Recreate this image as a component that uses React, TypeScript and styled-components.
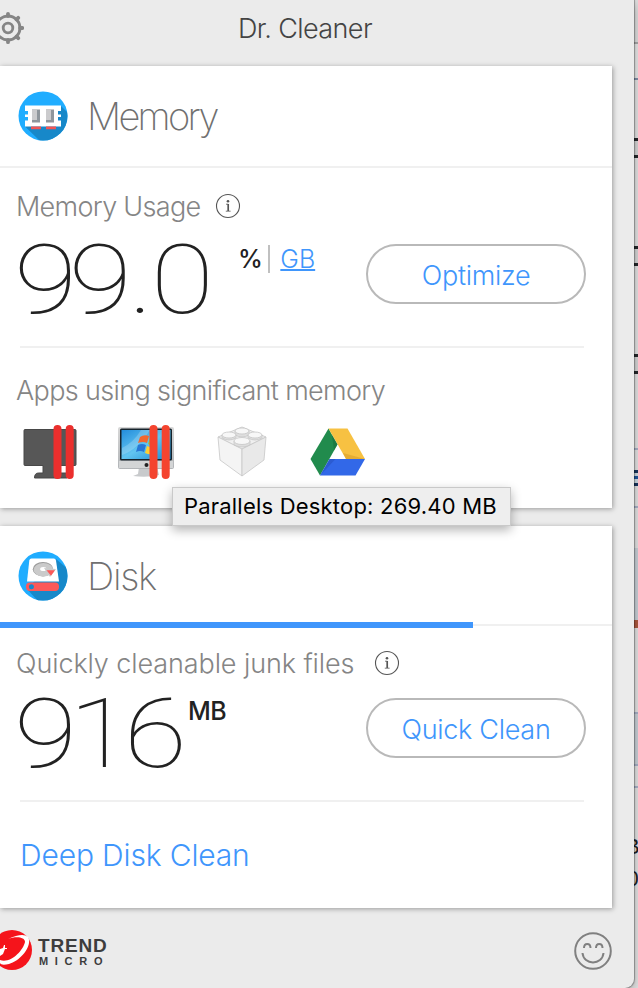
import React from 'react';
import styled, { createGlobalStyle } from 'styled-components';

const GlobalStyle = createGlobalStyle`
  * { box-sizing: border-box; }
  body {
    margin: 0;
    overflow: hidden;
    background: #e4e4e4;
    font-family: Inter, "Liberation Sans", sans-serif;
  }
`;

const Desktop = styled.div`
  display: grid;
  grid-template-columns: 634px 4px;
  width: 638px;
  height: 988px;
  overflow: hidden;
`;

const Window = styled.main`
  position: relative;
  z-index: 1;
  display: flex;
  flex-direction: column;
  background: #ebebeb;
  border-bottom-right-radius: 9px;
  box-shadow: 0 0 1px 1px rgba(0, 0, 0, 0.3), 0 4px 12px rgba(0, 0, 0, 0.3);
`;

const Header = styled.header`
  display: flex;
  align-items: center;
  flex: none;
  height: 66px;
  padding-bottom: 10px;
`;

const Title = styled.h1`
  margin: 0 0 0 214px;
  font-size: 27px;
  font-weight: 300;
  letter-spacing: -0.6px;
  white-space: nowrap;
  color: #444;
`;

const Card = styled.section<{ $height: number }>`
  flex: none;
  width: 612px;
  height: ${({ $height }) => $height}px;
  margin-bottom: 18px;
  background: #fff;
  box-shadow: 1px 1px 5px rgba(0, 0, 0, 0.35);
`;

const CardHead = styled.div`
  display: flex;
  align-items: center;
  gap: 19px;
  height: 102px;
  padding-left: 18px;
  border-bottom: 2px solid #f0f0f0;
`;

const DiskHead = styled(CardHead)`
  height: 98px;
  padding-top: 2px;
  border: 0;
`;

const CardTitle = styled.h2<{ $spacing: number }>`
  margin: 0;
  font-size: 38px;
  line-height: 48px;
  font-weight: 200;
  letter-spacing: ${({ $spacing }) => $spacing}px;
  color: #707070;
`;

const Track = styled.div`
  height: 6px;
  margin-top: -2px;
  background: linear-gradient(#fff 2px, #f0f0f0 2px, #f0f0f0 4px, #fff 4px);
`;

const Bar = styled.div`
  height: 6px;
  background: #3f96fc;
`;

const LabelRow = styled.div<{ $gap: number; $height: number }>`
  display: flex;
  align-items: center;
  gap: ${({ $gap }) => $gap}px;
  height: ${({ $height }) => $height}px;
  padding: 2px 0 0 16px;
`;

const Label = styled.span<{ $spacing: number }>`
  font-size: 27px;
  font-weight: 300;
  letter-spacing: ${({ $spacing }) => $spacing}px;
  white-space: nowrap;
  color: #858585;
`;

const ValueRow = styled.div`
  display: flex;
  height: 106px;
  margin: 0 26px 0 20px;
  background: linear-gradient(#f0f0f0, #f0f0f0) 0 100% / 564px 2px no-repeat;
`;

const ValueBox = styled.div<{ $width: number }>`
  flex: none;
  width: ${({ $width }) => $width}px;
  margin-left: -6px;
`;

const Value = styled.span`
  display: inline-block;
  font-family: Roboto, "Liberation Sans", sans-serif;
  font-size: 97px;
  font-weight: 100;
  line-height: 77px;
  letter-spacing: -7px;
  white-space: nowrap;
  color: #222;
  transform: scaleX(1.19);
  transform-origin: left;
`;

const Point = styled.span`
  margin: 0 5px 0 4px;
`;

const Units = styled.div<{ $top: number }>`
  display: flex;
  align-items: center;
  height: 30px;
  margin-top: ${({ $top }) => $top}px;
  font-size: 25px;
  color: #222;
`;

const Unit = styled.span`
  font-weight: 500;
  letter-spacing: -0.5px;
`;

const UnitLink = styled.a`
  padding-left: 10px;
  margin-left: 6px;
  border-left: 2px solid #c0c0c0;
  line-height: 28px;
  font-weight: 300;
  color: #3f96fc;
  text-decoration: underline;
  text-decoration-thickness: 2px;
`;

const PillButton = styled.button<{ $spacing: number }>`
  width: 220px;
  height: 60px;
  margin: 2px 0 0 auto;
  padding: 3px 0 0;
  border: 2px solid #b9b9b9;
  border-radius: 30px;
  background: #fff;
  font: 300 27px Inter, sans-serif;
  letter-spacing: ${({ $spacing }) => $spacing}px;
  color: #3f96fc;
`;

const AppsLabel = styled.div`
  display: flex;
  align-items: center;
  height: 72px;
  padding: 12px 0 0 16px;
`;

const Apps = styled.div`
  position: relative;
  display: flex;
  gap: 36px;
  padding-left: 20px;
`;

const Tooltip = styled.div`
  position: absolute;
  z-index: 2;
  left: 172px;
  top: 67px;
  display: flex;
  align-items: center;
  width: 339px;
  height: 39px;
  padding: 0 0 2px 11px;
  border: 1px solid #c9c9c9;
  background: #eeeeee;
  box-shadow: 0 4px 10px rgba(0, 0, 0, 0.3);
  font-size: 22px;
  letter-spacing: 0.2px;
  white-space: nowrap;
  color: #000;
`;

const DeepClean = styled.a`
  display: block;
  padding: 35px 0 0 20px;
  font-size: 30px;
  font-weight: 300;
  letter-spacing: -0.15px;
  color: #3f96fc;
`;

const Footer = styled.footer`
  display: flex;
  align-items: center;
  gap: 6px;
  height: 50px;
  padding-right: 22px;
`;

const Brand = styled.div`
  flex: 1;
  font-family: "Liberation Sans", sans-serif;
  font-weight: 700;
  color: #3d3d3d;
`;

const BrandTop = styled.div`
  font-size: 19px;
  line-height: 19px;
  letter-spacing: 0.8px;
`;

const BrandBottom = styled.div`
  padding-left: 1px;
  font-size: 11px;
  line-height: 12px;
  letter-spacing: 6.7px;
`;

const Backdrop = styled.div`
  width: 4px;
  overflow: hidden;
`;

const Strip = styled.div<{ $height: number; $color: string }>`
  height: ${({ $height }) => $height}px;
  background: ${({ $color }) => $color};
`;

const strips: [number, string][] = [
  [42, '#dedede'], [2, '#a9a9a9'],
  [34, '#e8e8e8'], [2, '#8190a8'],
  [58, '#e4e4e4'], [3, '#25292c'], [14, '#d6d6d6'], [3, '#25292c'],
  [88, '#e4e4e4'], [3, '#25292c'], [14, '#d6d6d6'], [3, '#25292c'],
  [88, '#e4e4e4'], [3, '#25292c'], [14, '#d6d6d6'], [3, '#25292c'],
  [74, '#e4e4e4'], [2, '#a9b2c8'], [20, '#e4e4e4'],
  [3, '#17365f'], [3, '#cfdce4'], [3, '#1d559c'], [4, '#cfdce4'], [3, '#17365f'],
  [20, '#e4e4e4'], [2, '#a9b2c8'], [40, '#e4e4e4'],
  [72, '#c9d1d8'], [8, '#b0593f'],
  [84, '#e4e4e4'], [2, '#a9b2c8'], [50, '#c9d1d8'], [2, '#a9b2c8'],
  [20, '#e4e4e4'], [2, '#a9b2c8'], [43, '#e4e4e4'],
];

const Fragment = styled.div<{ $shift: number }>`
  height: 32px;
  margin-left: ${({ $shift }) => $shift}px;
  background: #e4e4e4;
  font: 22px/32px "Liberation Sans", sans-serif;
  color: #222;
`;

const GearIcon = () => (
  <svg width="24" height="34" viewBox="0 11 24 34" fill="none" stroke="#858585">
    <circle cx="8" cy="28" r="12" strokeWidth="2.8" />
    <circle cx="8" cy="28" r="4.8" strokeWidth="2.8" />
    <path d="M8 16v-2.2M8 40v2.2M20 28h2.3M16.5 19.5l1.7-1.7M16.5 36.5l1.7 1.7" strokeWidth="3.8" strokeLinecap="round" />
  </svg>
);

const InfoIcon = () => (
  <svg width="26" height="26" viewBox="0 0 26 26" fill="none" stroke="#555">
    <circle cx="13" cy="13" r="11.5" strokeWidth="1.1" />
    <circle cx="13" cy="8.3" r="1.3" fill="#555" stroke="none" />
    <path d="M11 11.2h2.3M10.8 18.2h4.8" strokeWidth="0.8" />
    <path d="M13.2 11v7" strokeWidth="1.7" />
  </svg>
);

const MemoryIcon = () => (
  <svg width="50" height="50" viewBox="0 0 50 50">
    <clipPath id="mem"><circle cx="25" cy="25" r="24.5" /></clipPath>
    <g clipPath="url(#mem)">
      <path fill="#20adff" d="M0 0h50v50H0z" />
      <path fill="#1788c9" d="M7 35.5 22 50h28V22l-7-7z" />
      <path fill="#fff" d="M7 14.5h36V20h-3v3.500h3V26h-3v3.500h3v6H7v-6h3V26H7v-2.500h3V20H7z" />
      <path fill="#ef5656" d="M13 35.500h10v2.800H13zM28 35.500h10v2.800H28z" />
      <path fill="#8f969c" d="M14 18.500h8v13h-8zM28 18.500h8v13h-8z" />
      <path fill="#cbcbcd" d="M14 18.500h5v10.500h-5zM28 18.500h5v10.500h-5z" />
    </g>
  </svg>
);

const DiskIcon = () => (
  <svg width="50" height="50" viewBox="0 0 50 50">
    <clipPath id="disk"><circle cx="25" cy="25" r="24.5" /></clipPath>
    <g clipPath="url(#disk)">
      <path fill="#20adff" d="M0 0h50v50H0z" />
      <path fill="#1788c9" d="M38 8 52 20v30H20L9 38z" />
      <path fill="#fff" d="M13.5 7.5h22.2q2 0 2.3 2L41 30.5H9L11.3 9.5q.3-2 2.2-2z" />
      <ellipse cx="25" cy="18.2" rx="10.2" ry="7.2" fill="#999" />
      <ellipse cx="25.4" cy="18.8" rx="9.8" ry="6.8" fill="#cacaca" />
      <ellipse cx="25.3" cy="18" rx="3.2" ry="2" fill="#fff" />
      <path fill="#cacaca" d="m26 17 12 1-6 8z" />
      <path fill="#fc5959" d="M28.5 19.3H37l-4 5.5z" />
      <rect x="8" y="31.5" width="33" height="8.5" rx="4" fill="#fc5959" />
      <circle cx="13.4" cy="35.8" r="2.5" fill="#1788c9" />
    </g>
  </svg>
);

const ParallelsIcon = () => (
  <svg width="60" height="60" viewBox="0 0 60 60">
    <path fill="#575757" stroke="#484848" d="M5 9.5h50q1 0 1 1v34q0 1-1 1H37V53h10v5H14.500q0-5 4-5h4.500v-7.500H5q-1 0-1-1v-34q0-1 1-1z" />
    <path stroke="#eb2f2d" strokeWidth="8" strokeLinecap="round" d="M37.500 9v46M49.700 9v46" />
  </svg>
);

const WindowsMacIcon = () => (
  <svg width="60" height="60" viewBox="0 0 60 60">
    <defs>
      <linearGradient id="screen" x2="1" y2="1">
        <stop stopColor="#238cdb" /><stop offset=".5" stopColor="#62c5f1" /><stop offset="1" stopColor="#188ad3" />
      </linearGradient>
      <linearGradient id="metal" x2="0" y2="1">
        <stop stopColor="#d8d8d8" /><stop offset="1" stopColor="#b1b4b7" />
      </linearGradient>
    </defs>
    <path d="M23 47h18l2 8q-12 3-26 1l5-2z" fill="#c8cacc" />
    <rect x="2" y="7" width="56" height="42" rx="2" fill="url(#metal)" />
    <path d="M3 41h54v7H3z" fill="#d3d5d6" />
    <rect x="4" y="8.500" width="52" height="32" rx="1.500" fill="#16232c" />
    <rect x="5.500" y="10" width="49" height="29" fill="url(#screen)" />
    <path d="M6 35q15-5 28-25h-9Q18 22 6 28z" fill="#fff" opacity=".2" />
    <path d="M24 17q4-3 9-1l-2 7q-4-2-9 0z" fill="#f2672f" /><path d="M34 17q3 2 7 1l-2 7q-4 1-7-1z" fill="#9bc83d" />
    <path d="M22 25q4-2 8 0l-2 7q-4-2-8 0z" fill="#2877d5" /><path d="M31 26q4 2 8 1l-2 7q-4 1-8-1z" fill="#ffd032" />
    <circle cx="30.500" cy="45" r="2" fill="#222" />
    <path stroke="#f4442f" strokeWidth="8" strokeLinecap="round" d="M37.500 9v46M49.700 9v46" />
  </svg>
);

const BrickIcon = () => (
  <svg width="60" height="60" viewBox="0 0 60 60">
    <g stroke="#c6c6c6" strokeWidth=".8" strokeLinejoin="round">
      <path d="M6 17 30 7l24 10-24 12z" fill="#f0f0f0" />
      <path d="M6 17 30 29v27L8 40z" fill="#f4f4f4" /><path d="M54 17 30 29v27l22-16z" fill="#e9e9e9" />
      <path d="M23 11v4q7 4 14 0v-4z" fill="#dedede" /><ellipse cx="30" cy="11" rx="7" ry="3" fill="#f7f7f7" />
      <path d="M10 15v3q7 4 14 0v-3z" fill="#dedede" /><ellipse cx="17" cy="15" rx="7" ry="3" fill="#f7f7f7" />
      <path d="M36 15v3q7 4 14 0v-3z" fill="#dedede" /><ellipse cx="43" cy="15" rx="7" ry="3" fill="#f7f7f7" />
      <path d="M22 21v4q8 4 16 0v-4z" fill="#dedede" /><ellipse cx="30" cy="21" rx="8" ry="3.500" fill="#f7f7f7" />
    </g>
  </svg>
);

const DriveIcon = () => (
  <svg width="60" height="60" viewBox="0 0 60 60">
    <path fill="#218b4d" d="m20.500 8.500 9 16L12 55.500 2.500 39z" />
    <path fill="#f7c142" d="M20.500 8.500h19L57 39H38z" />
    <path fill="#3268e8" d="M21.500 39H57l-9.500 16.500H12z" />
    <path fill="#176f3d" d="m24 15 5.500 9.500-3.500 6z" opacity=".6" />
    <path fill="#d99f2b" d="m35 33 22 6H38z" opacity=".6" />
    <path fill="#244dbb" d="M21.500 39h6L12 55.500z" opacity=".5" />
  </svg>
);

const TrendLogo = () => (
  <svg width="32" height="42" viewBox="0 0 32 42">
    <circle cx="12" cy="20" r="20" fill="#f5141b" />
    <path fill="#fff" d="M8 9Q23 2 28 7c5 8-7 24-19 27-5 1-8 1-9-1v-3c10 4 23-9 25-18 0-5-9-6-17-3zM0 19l3-1 1-3h1v3h2v1H5l-2 5-3 2z" />
  </svg>
);

const SmileIcon = () => (
  <svg width="38" height="38" viewBox="0 0 38 38" fill="none" stroke="#808080" strokeWidth="2">
    <circle cx="19" cy="19" r="17.800" />
    <path d="M8.500 21c1 12.500 20 12.500 21 0M10 16c0-5.500 6.500-5.500 6.500 0M22 16c0-5.500 6.500-5.500 6.500 0" />
  </svg>
);

const App: React.FC = () => {
  return (
    <Desktop>
      <GlobalStyle />
      <Window>
        <Header>
          <GearIcon />
          <Title>Dr. Cleaner</Title>
        </Header>

        <Card $height={442}>
          <CardHead>
            <MemoryIcon />
            <CardTitle $spacing={-2.7}>Memory</CardTitle>
          </CardHead>
          <LabelRow $gap={15} $height={74}>
            <Label $spacing={-0.7}>Memory Usage</Label>
            <InfoIcon />
          </LabelRow>
          <ValueRow>
            <ValueBox $width={224}>
              <Value>99<Point>.</Point>0</Value>
            </ValueBox>
            <Units $top={2}>
              <Unit>%</Unit>
              <UnitLink>GB</UnitLink>
            </Units>
            <PillButton $spacing={-0.3}>Optimize</PillButton>
          </ValueRow>
          <AppsLabel>
            <Label $spacing={-0.65}>Apps using significant memory</Label>
          </AppsLabel>
          <Apps>
            <ParallelsIcon />
            <WindowsMacIcon />
            <BrickIcon />
            <DriveIcon />
            <Tooltip>Parallels Desktop: 269.40 MB</Tooltip>
          </Apps>
        </Card>

        <Card $height={382}>
          <DiskHead>
            <DiskIcon />
            <CardTitle $spacing={-1.3}>Disk</CardTitle>
          </DiskHead>
          <Track>
            <Bar style={{ width: 473 }} />
          </Track>
          <LabelRow $gap={20} $height={68}>
            <Label $spacing={-0.1}>Quickly cleanable junk files</Label>
            <InfoIcon />
          </LabelRow>
          <ValueRow>
            <ValueBox $width={174}>
              <Value>916</Value>
            </ValueBox>
            <Units $top={0}>
              <Unit>MB</Unit>
            </Units>
            <PillButton $spacing={-0.3}>Quick Clean</PillButton>
          </ValueRow>
          <DeepClean>Deep Disk Clean</DeepClean>
        </Card>

        <Footer>
          <TrendLogo />
          <Brand>
            <BrandTop>TREND</BrandTop>
            <BrandBottom>MICRO</BrandBottom>
          </Brand>
          <SmileIcon />
        </Footer>
      </Window>

      <Backdrop>
        {strips.map(([height, color], i) => (
          <Strip key={i} $height={height} $color={color} />
        ))}
        <Fragment $shift={-9}>B</Fragment>
        <Fragment $shift={-7.5}>0</Fragment>
      </Backdrop>
    </Desktop>
  );
};

export default App;
